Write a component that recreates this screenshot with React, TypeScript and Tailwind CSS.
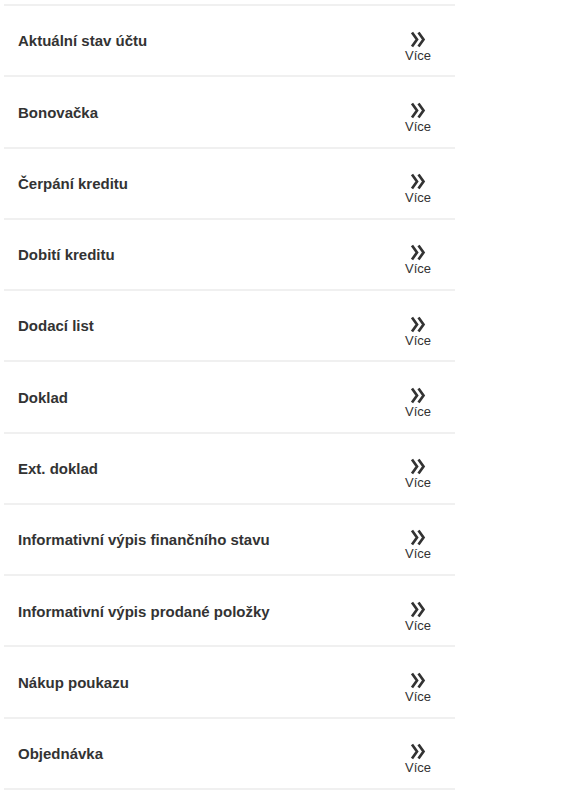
import React from "react";

const items = [
  "Aktuální stav účtu",
  "Bonovačka",
  "Čerpání kreditu",
  "Dobití kreditu",
  "Dodací list",
  "Doklad",
  "Ext. doklad",
  "Informativní výpis finančního stavu",
  "Informativní výpis prodané položky",
  "Nákup poukazu",
  "Objednávka",
];

function Chevrons() {
  return (
    <svg width="16" height="17" viewBox="0 0 16 17" fill="none">
      <polyline points="2,1.5 7,8.5 2,15.5" stroke="#333" strokeWidth="2.7" strokeLinejoin="miter" />
      <polyline points="8.5,1.5 13.5,8.5 8.5,15.5" stroke="#333" strokeWidth="2.7" strokeLinejoin="miter" />
    </svg>
  );
}

export default function App() {
  return (
    <div className="w-[562px] h-[797px] bg-white overflow-hidden" style={{ fontFamily: '"Liberation Sans", Arial, sans-serif' }}>
      <div className="ml-[4px] w-[451px] mt-[4px] border-t-2 border-[#f0f0f0]">
        {items.map((t) => (
          <div key={t} className="flex items-center justify-between h-[71.27px] border-b-2 border-[#f0f0f0]">
            <div className="pl-[14px] pt-[2px] text-[15px] font-bold text-[#333]">{t}</div>
            <div className="flex flex-col items-center mr-[24px] mt-[12px]">
              <Chevrons />
              <span className="text-[13px] leading-[15px] text-[#333]">Více</span>
            </div>
          </div>
        ))}
      </div>
    </div>
  );
}
